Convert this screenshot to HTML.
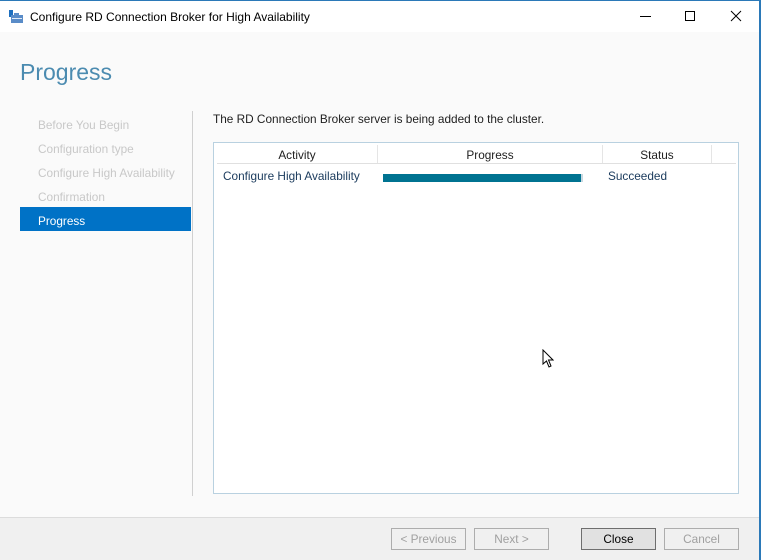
<!DOCTYPE html>
<html><head><meta charset="utf-8"><style>
*{margin:0;padding:0;box-sizing:border-box}
body{width:761px;height:560px;overflow:hidden;background:#fafafa;font-family:"Liberation Sans",sans-serif;font-size:11.8px;position:relative;color:#1e1e1e}
.a{position:absolute}
.title{left:0;top:0;width:761px;height:32px;background:#fff;border-top:1px solid #2b79b8}
.nav{left:38px;color:#c8c8c8}
.btn{height:22px;top:528px;border:1px solid #adadad;background:#f0f0f0;text-align:center;line-height:21px;color:#a0a0a0}
</style></head><body>
<div class="a title"></div>
<svg class="a" style="left:8px;top:9px" width="16" height="15"><rect x="1" y="1" width="4" height="7" fill="#1e6fbf"/><rect x="3" y="6" width="12" height="8" fill="#5a8cc8"/><rect x="6" y="4" width="5" height="2" fill="#5a8cc8"/><rect x="4" y="9" width="10" height="1" fill="#dfe9f5"/></svg>
<div class="a" style="left:30px;top:10px;font-size:12px;color:#000">Configure RD Connection Broker for High Availability</div>
<div class="a" style="left:640px;top:16px;width:11px;height:1px;background:#000"></div>
<div class="a" style="left:685px;top:11px;width:10px;height:10px;border:1px solid #000"></div>
<svg class="a" style="left:730px;top:10px" width="12" height="12"><path d="M1 1L11 11M11 1L1 11" stroke="#000" stroke-width="1"/></svg>
<div class="a" style="left:759px;top:0;width:2px;height:560px;background:#2b79b8"></div>
<div class="a" style="left:20px;top:59px;font-size:23px;color:#4b8bb0">Progress</div>
<div class="a" style="left:192px;top:111px;width:1px;height:385px;background:#d0d0d0"></div>
<div class="a nav" style="top:118px">Before You Begin</div>
<div class="a nav" style="top:142px">Configuration type</div>
<div class="a nav" style="top:166px">Configure High Availability</div>
<div class="a nav" style="top:190px">Confirmation</div>
<div class="a" style="left:20px;top:207px;width:171px;height:24px;background:#0072c6"></div>
<div class="a" style="left:38px;top:214px;color:#fff">Progress</div>
<div class="a" style="left:213px;top:112px">The RD Connection Broker server is being added to the cluster.</div>
<div class="a" style="left:213px;top:142px;width:526px;height:352px;border:1px solid #b9d1e0;background:#fff"></div>
<div class="a" style="left:217px;top:145px;width:519px;height:19px;border-bottom:1px solid #e0e0e0"></div>
<div class="a" style="left:377px;top:145px;width:1px;height:18px;background:#e5e5e5"></div>
<div class="a" style="left:602px;top:145px;width:1px;height:18px;background:#e5e5e5"></div>
<div class="a" style="left:711px;top:145px;width:1px;height:18px;background:#e5e5e5"></div>
<div class="a" style="left:217px;top:148px;width:160px;text-align:center">Activity</div>
<div class="a" style="left:378px;top:148px;width:224px;text-align:center">Progress</div>
<div class="a" style="left:603px;top:148px;width:108px;text-align:center">Status</div>
<div class="a" style="left:223px;top:169px;color:#1a3a5c">Configure High Availability</div>
<div class="a" style="left:383px;top:174px;width:198px;height:8px;background:#007391"></div>
<div class="a" style="left:581px;top:174px;width:2px;height:8px;background:#c8d8e0"></div>
<div class="a" style="left:608px;top:169px;color:#1a3a5c">Succeeded</div>
<svg class="a" style="left:542px;top:349px" width="12" height="19"><path d="M1 1L1 15L4.5 12L7 18L9 17L6.5 11L11 11Z" fill="#fff" stroke="#000" stroke-width="1"/></svg>
<div class="a" style="left:0;top:517px;width:759px;height:43px;background:#f0f0f0;border-top:1px solid #dcdcdc"></div>
<div class="a btn" style="left:391px;width:75px">&lt; Previous</div>
<div class="a btn" style="left:474px;width:75px">Next &gt;</div>
<div class="a btn" style="left:581px;width:75px;border-color:#6e6e6e;background:#e1e1e1;color:#000">Close</div>
<div class="a btn" style="left:664px;width:75px">Cancel</div>
</body></html>
